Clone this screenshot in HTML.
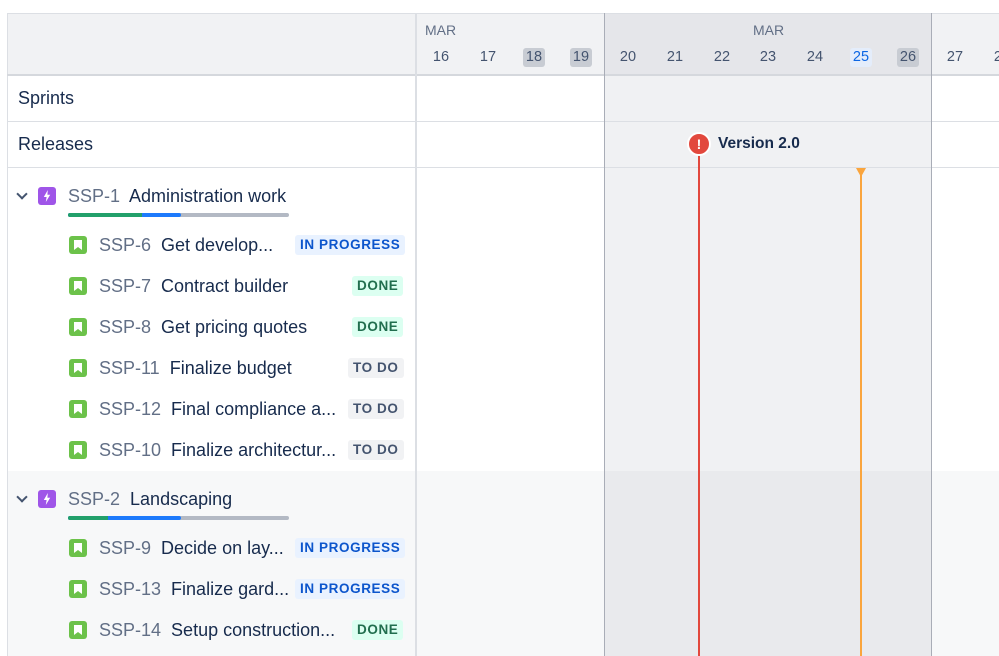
<!DOCTYPE html><html><head><style>
*{margin:0;padding:0;box-sizing:border-box}
body{width:999px;height:656px;overflow:hidden;background:#fff;font-family:"Liberation Sans",Arial,sans-serif;position:relative;color:#172b4d}
.a{position:absolute}
.day{position:absolute;top:48px;width:22px;height:19px;margin-left:-11px;text-align:center;font-size:14.5px;line-height:19px;color:#44546f;border-radius:3px}
.lbl{font-size:18px;color:#172b4d}
.key{color:#626f86}
.story{position:absolute;width:18px;height:18px;background:#6cc24a;border-radius:3px}
.story:after{content:"";position:absolute;left:5px;top:4px;width:8px;height:10px;background:#fff;clip-path:polygon(0 0,100% 0,100% 100%,50% 70%,0 100%)}
.epic{position:absolute;width:18px;height:18px;background:#9f55e8;border-radius:3px}
.epic:after{content:"";position:absolute;left:5px;top:3px;width:8px;height:12px;background:#fff;clip-path:polygon(60% 0,10% 58%,45% 58%,35% 100%,90% 40%,55% 40%)}
.lz{position:absolute;border-radius:3px;font-size:13.5px;font-weight:bold;letter-spacing:.6px;height:20px;line-height:20px;padding:0 5px}
.ip{background:#e9f2ff;color:#0c55cc}
.dn{background:#dcfff1;color:#216e4e}
.td{background:#f1f2f4;color:#44546f}
.row{position:absolute;left:0;font-size:18px;white-space:nowrap}
.chev{position:absolute;width:8px;height:8px;border-right:2px solid #44546f;border-bottom:2px solid #44546f;transform:rotate(45deg)}
</style></head><body>
<div class="a" style="left:7px;top:13px;width:992px;height:62px;background:#f1f2f4"></div>
<div class="a" style="left:604px;top:13px;width:328px;height:62px;background:#e5e6ea"></div>
<div class="a" style="left:7px;top:471px;width:992px;height:185px;background:#f7f8f9"></div>
<div class="a" style="left:604px;top:75px;width:328px;height:581px;background:#f0f1f3"></div>
<div class="a" style="left:604px;top:471px;width:328px;height:185px;background:#e9eaed"></div>
<div class="a" style="left:7px;top:13px;width:992px;height:1px;background:#dcdfe4"></div>
<div class="a" style="left:7px;top:13px;width:1px;height:643px;background:#dcdfe4"></div>
<div class="a" style="left:7px;top:74px;width:992px;height:2px;background:#d5d8dd"></div>
<div class="a" style="left:7px;top:121px;width:992px;height:1px;background:#dcdfe4"></div>
<div class="a" style="left:7px;top:167px;width:992px;height:1px;background:#dcdfe4"></div>
<div class="a" style="left:415px;top:13px;width:2px;height:643px;background:#dcdfe4"></div>
<div class="a" style="left:604px;top:13px;width:1px;height:643px;background:#a9adb7"></div>
<div class="a" style="left:931px;top:13px;width:1px;height:643px;background:#a9adb7"></div>
<div class="a" style="left:425px;top:22px;font-size:14px;color:#626f86">MAR</div>
<div class="a" style="left:753px;top:22px;font-size:14px;color:#626f86">MAR</div>
<div class="day" style="left:441px">16</div>
<div class="day" style="left:488px">17</div>
<div class="day" style="left:534px;background:#c8ccd3">18</div>
<div class="day" style="left:581px;background:#c8ccd3">19</div>
<div class="day" style="left:628px">20</div>
<div class="day" style="left:675px">21</div>
<div class="day" style="left:722px">22</div>
<div class="day" style="left:768px">23</div>
<div class="day" style="left:815px">24</div>
<div class="day" style="left:861px;color:#0c66e4;background:#e4edfb">25</div>
<div class="day" style="left:908px;background:#c8ccd3">26</div>
<div class="day" style="left:955px">27</div>
<div class="day" style="left:1002px">28</div>
<div class="a lbl" style="left:18px;top:88px">Sprints</div>
<div class="a lbl" style="left:18px;top:134px">Releases</div>
<div class="a" style="left:698px;top:144px;width:2px;height:512px;background:#e2483d"></div>
<div class="a" style="left:860px;top:168px;width:2px;height:488px;background:#faa53d"></div>
<div class="a" style="left:856px;top:168px;width:10px;height:9px;background:#faa53d;clip-path:polygon(0 0,100% 0,50% 100%)"></div>
<div class="a" style="left:687px;top:132px;width:24px;height:24px;border-radius:50%;background:#e2483d;border:2px solid #fff;color:#fff;font-weight:bold;font-size:14px;text-align:center;line-height:20px">!</div>
<div class="a" style="left:718px;top:135px;font-size:15.5px;font-weight:bold;color:#172b4d">Version 2.0</div>
<div class="chev" style="left:18px;top:190px"></div>
<div class="epic" style="left:38px;top:187px"></div>
<div class="row" style="left:68px;top:186px"><span class="key">SSP-1</span>&nbsp; Administration work</div>
<div class="a" style="left:68px;top:213px;width:221px;height:4px;border-radius:2px;background:#b3b9c4"></div>
<div class="a" style="left:68px;top:213px;width:113px;height:4px;border-radius:2px;background:#1d7afc"></div>
<div class="a" style="left:68px;top:213px;width:74px;height:4px;border-radius:2px 0 0 2px;background:#22a06b"></div>
<div class="story" style="left:69px;top:236px"></div><div class="row" style="left:99px;top:235px"><span class="key">SSP-6</span>&nbsp; Get develop...</div><div class="lz ip" style="left:295px;top:235px">IN PROGRESS</div>
<div class="story" style="left:69px;top:277px"></div><div class="row" style="left:99px;top:276px"><span class="key">SSP-7</span>&nbsp; Contract builder</div><div class="lz dn" style="left:352px;top:276px">DONE</div>
<div class="story" style="left:69px;top:318px"></div><div class="row" style="left:99px;top:317px"><span class="key">SSP-8</span>&nbsp; Get pricing quotes</div><div class="lz dn" style="left:352px;top:317px">DONE</div>
<div class="story" style="left:69px;top:359px"></div><div class="row" style="left:99px;top:358px"><span class="key">SSP-11</span>&nbsp; Finalize budget</div><div class="lz td" style="left:348px;top:358px">TO DO</div>
<div class="story" style="left:69px;top:400px"></div><div class="row" style="left:99px;top:399px"><span class="key">SSP-12</span>&nbsp; Final compliance a...</div><div class="lz td" style="left:348px;top:399px">TO DO</div>
<div class="story" style="left:69px;top:441px"></div><div class="row" style="left:99px;top:440px"><span class="key">SSP-10</span>&nbsp; Finalize architectur...</div><div class="lz td" style="left:348px;top:440px">TO DO</div>
<div class="chev" style="left:18px;top:493px"></div>
<div class="epic" style="left:38px;top:490px"></div>
<div class="row" style="left:68px;top:489px"><span class="key">SSP-2</span>&nbsp; Landscaping</div>
<div class="a" style="left:68px;top:516px;width:221px;height:4px;border-radius:2px;background:#b3b9c4"></div>
<div class="a" style="left:68px;top:516px;width:113px;height:4px;border-radius:2px;background:#1d7afc"></div>
<div class="a" style="left:68px;top:516px;width:40px;height:4px;border-radius:2px 0 0 2px;background:#22a06b"></div>
<div class="story" style="left:69px;top:539px"></div><div class="row" style="left:99px;top:538px"><span class="key">SSP-9</span>&nbsp; Decide on lay...</div><div class="lz ip" style="left:295px;top:538px">IN PROGRESS</div>
<div class="story" style="left:69px;top:580px"></div><div class="row" style="left:99px;top:579px"><span class="key">SSP-13</span>&nbsp; Finalize gard...</div><div class="lz ip" style="left:295px;top:579px">IN PROGRESS</div>
<div class="story" style="left:69px;top:621px"></div><div class="row" style="left:99px;top:620px"><span class="key">SSP-14</span>&nbsp; Setup construction...</div><div class="lz dn" style="left:352px;top:620px">DONE</div>
</body></html>
